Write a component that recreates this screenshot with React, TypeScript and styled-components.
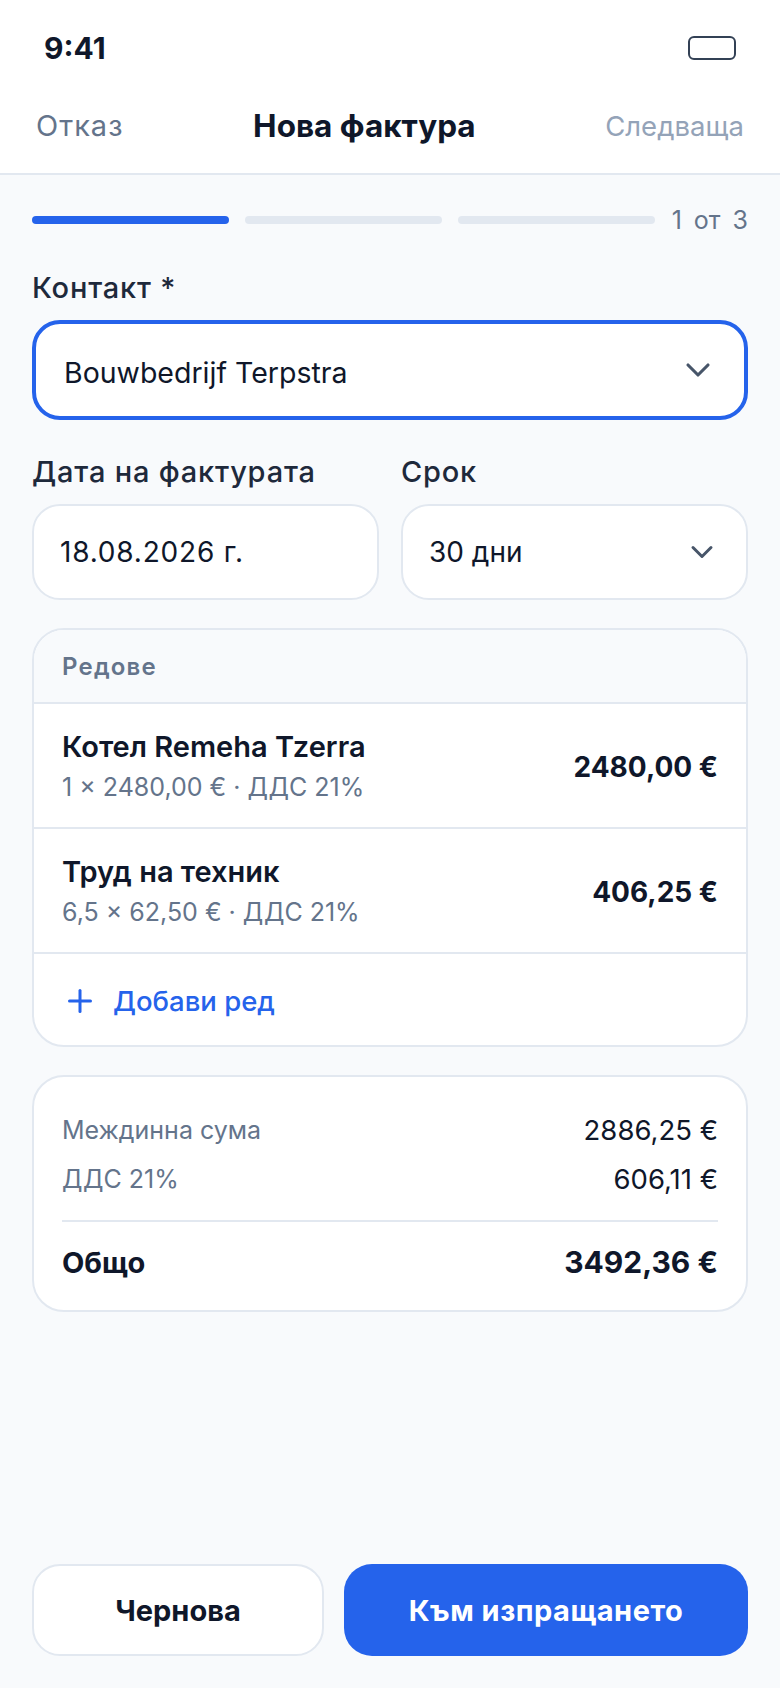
import React from 'react';
import styled, { createGlobalStyle } from 'styled-components';
import { ChevronDown, Plus } from 'lucide-react';

const GlobalStyle = createGlobalStyle`
  * { box-sizing: border-box; }
  body {
    margin: 0;
    background: #f8fafc;
    color: #0f172a;
    font-family: Inter, "Noto Sans", sans-serif;
  }
`;

const Screen = styled.div`
  display: flex;
  flex-direction: column;
  min-height: 1688px;
  background: #f8fafc;
`;

const StatusBar = styled.div`
  display: flex;
  align-items: center;
  justify-content: space-between;
  height: 78px;
  padding: 30px 44px 12px 44px;
  background: #fff;
`;

const Clock = styled.span`
  font-size: 30px;
  font-weight: 700;
  line-height: 36px;
`;

const Battery = styled.div`
  width: 48px;
  height: 24px;
  border: 2px solid #334155;
  border-radius: 6px;
`;

const NavBar = styled.div`
  display: flex;
  align-items: center;
  justify-content: space-between;
  height: 97px;
  padding: 0 36px;
  background: #fff;
  border-bottom: 2px solid #e2e8f0;
`;

const NavAction = styled.span<{ $muted?: boolean }>`
  font-size: ${(p) => (p.$muted ? '27.5px' : '29px')};
  letter-spacing: ${(p) => (p.$muted ? '0' : '1px')};
  color: ${(p) => (p.$muted ? '#94a3b8' : '#64748b')};
`;

const NavTitle = styled.span`
  font-size: 31.5px;
  font-weight: 700;
`;

const Main = styled.main`
  flex: 1;
  display: flex;
  flex-direction: column;
  padding: 30px 32px 0;
`;

const Progress = styled.div`
  display: flex;
  align-items: center;
  gap: 16px;
  height: 30px;
  margin-bottom: 36px;
`;

const Step = styled.div<{ $active?: boolean }>`
  flex: 1;
  height: 8px;
  border-radius: 4px;
  background: ${(p) => (p.$active ? '#2563eb' : '#e2e8f0')};
`;

const StepCount = styled.span`
  font-size: 25px;
  word-spacing: 5px;
  color: #64748b;
  margin-left: 1px;
`;

const Label = styled.label`
  display: block;
  font-size: 29px;
  font-weight: 500;
  letter-spacing: 0.8px;
  line-height: 34px;
  margin-bottom: 15px;
  color: #1e293b;
`;

const Field = styled.div<{ $focused?: boolean }>`
  display: flex;
  align-items: center;
  justify-content: space-between;
  height: ${(p) => (p.$focused ? '100px' : '96px')};
  padding: 0 26px;
  background: #fff;
  border: ${(p) => (p.$focused ? '4px solid #2563eb' : '2px solid #e2e8f0')};
  border-radius: 28px;
  color: #0f172a;
`;

const FieldValue = styled.span<{ $focused?: boolean; $spaced?: boolean }>`
  font-size: ${(p) => (p.$focused ? '28.5px' : '28px')};
  letter-spacing: ${(p) => (p.$spaced ? '0.8px' : '0')};
  padding-top: ${(p) => (p.$focused ? '4px' : '0')};
  padding-left: ${(p) => (p.$focused ? '2px' : '0')};
`;

const FieldRow = styled.div`
  display: grid;
  grid-template-columns: 1fr 1fr;
  gap: 22px;
  margin-top: 35px;
  margin-bottom: 28px;
`;

const Chevron = styled(ChevronDown)`
  color: #475569;
  flex: none;
`;

const Card = styled.section`
  background: #fff;
  border: 2px solid #e2e8f0;
  border-radius: 32px;
  overflow: hidden;
`;

const LinesHeader = styled.div`
  display: flex;
  align-items: center;
  height: 74px;
  padding: 0 28px;
  background: #f8fafc;
  border-bottom: 2px solid #e2e8f0;
  font-size: 24px;
  font-weight: 600;
  letter-spacing: 1.2px;
  color: #64748b;
`;

const LineRow = styled.div`
  display: flex;
  align-items: center;
  justify-content: space-between;
  height: 125px;
  padding: 2px 28px 0;
  border-bottom: 2px solid #e2e8f0;
`;

const LineInfo = styled.div`
  display: flex;
  flex-direction: column;
  gap: 4px;
`;

const LineTitle = styled.div`
  font-size: 29px;
  font-weight: 600;
  line-height: 36px;
`;

const LineMeta = styled.div`
  font-size: 25px;
  line-height: 36px;
  color: #64748b;
`;

const LineAmount = styled.div`
  font-size: 28px;
  font-weight: 700;
`;

const AddRow = styled.div`
  display: flex;
  align-items: center;
  gap: 15px;
  height: 91px;
  padding: 2px 28px 0;
  font-size: 27.5px;
  font-weight: 500;
  color: #2563eb;
`;

const Totals = styled(Card)`
  margin-top: 28px;
  padding: 28px 28px 8px;
`;

const TotalRow = styled.div<{ $grand?: boolean }>`
  display: flex;
  align-items: center;
  justify-content: space-between;
  height: ${(p) => (p.$grand ? '80px' : '49px')};
`;

const TotalLabel = styled.span<{ $grand?: boolean }>`
  font-size: ${(p) => (p.$grand ? '29px' : '25px')};
  font-weight: ${(p) => (p.$grand ? 700 : 400)};
  color: ${(p) => (p.$grand ? '#0f172a' : '#64748b')};
`;

const TotalValue = styled.span<{ $grand?: boolean }>`
  font-size: ${(p) => (p.$grand ? '30px' : '27.5px')};
  font-weight: ${(p) => (p.$grand ? 700 : 400)};
`;

const Divider = styled.div`
  height: 2px;
  margin-top: 17px;
  background: #e2e8f0;
`;

const Footer = styled.footer`
  display: grid;
  grid-template-columns: 292px 1fr;
  gap: 20px;
  padding: 0 32px 32px;
`;

const Button = styled.button<{ $primary?: boolean }>`
  height: 92px;
  border: ${(p) => (p.$primary ? 'none' : '2px solid #e2e8f0')};
  border-radius: 28px;
  background: ${(p) => (p.$primary ? '#2563eb' : '#fff')};
  color: ${(p) => (p.$primary ? '#fff' : '#0f172a')};
  font-family: inherit;
  font-size: 29px;
  font-weight: 700;
  letter-spacing: ${(p) => (p.$primary ? '0.5px' : '0')};
`;

const lines = [
  { title: 'Котел Remeha Tzerra', meta: '1 × 2480,00 € · ДДС 21%', amount: '2480,00 €' },
  { title: 'Труд на техник', meta: '6,5 × 62,50 € · ДДС 21%', amount: '406,25 €' },
];

export default function App() {
  return (
    <Screen lang="bg">
      <GlobalStyle />
      <StatusBar>
        <Clock>9:41</Clock>
        <Battery />
      </StatusBar>
      <NavBar>
        <NavAction>Отказ</NavAction>
        <NavTitle>Нова фактура</NavTitle>
        <NavAction $muted>Следваща</NavAction>
      </NavBar>
      <Main>
        <Progress>
          <Step $active />
          <Step />
          <Step />
          <StepCount>1 от 3</StepCount>
        </Progress>
        <Label>Контакт *</Label>
        <Field $focused>
          <FieldValue $focused>Bouwbedrijf Terpstra</FieldValue>
          <Chevron size={40} strokeWidth={1.9} />
        </Field>
        <FieldRow>
          <div>
            <Label>Дата на фактурата</Label>
            <Field>
              <FieldValue $spaced>18.08.2026 г.</FieldValue>
            </Field>
          </div>
          <div>
            <Label>Срок</Label>
            <Field>
              <FieldValue>30 дни</FieldValue>
              <Chevron size={36} strokeWidth={2} />
            </Field>
          </div>
        </FieldRow>
        <Card>
          <LinesHeader>Редове</LinesHeader>
          {lines.map((line) => (
            <LineRow key={line.title}>
              <LineInfo>
                <LineTitle>{line.title}</LineTitle>
                <LineMeta>{line.meta}</LineMeta>
              </LineInfo>
              <LineAmount>{line.amount}</LineAmount>
            </LineRow>
          ))}
          <AddRow>
            <Plus size={36} strokeWidth={2} />
            Добави ред
          </AddRow>
        </Card>
        <Totals>
          <TotalRow>
            <TotalLabel>Междинна сума</TotalLabel>
            <TotalValue>2886,25 €</TotalValue>
          </TotalRow>
          <TotalRow>
            <TotalLabel>ДДС 21%</TotalLabel>
            <TotalValue>606,11 €</TotalValue>
          </TotalRow>
          <Divider />
          <TotalRow $grand>
            <TotalLabel $grand>Общо</TotalLabel>
            <TotalValue $grand>3492,36 €</TotalValue>
          </TotalRow>
        </Totals>
      </Main>
      <Footer>
        <Button>Чернова</Button>
        <Button $primary>Към изпращането</Button>
      </Footer>
    </Screen>
  );
}
